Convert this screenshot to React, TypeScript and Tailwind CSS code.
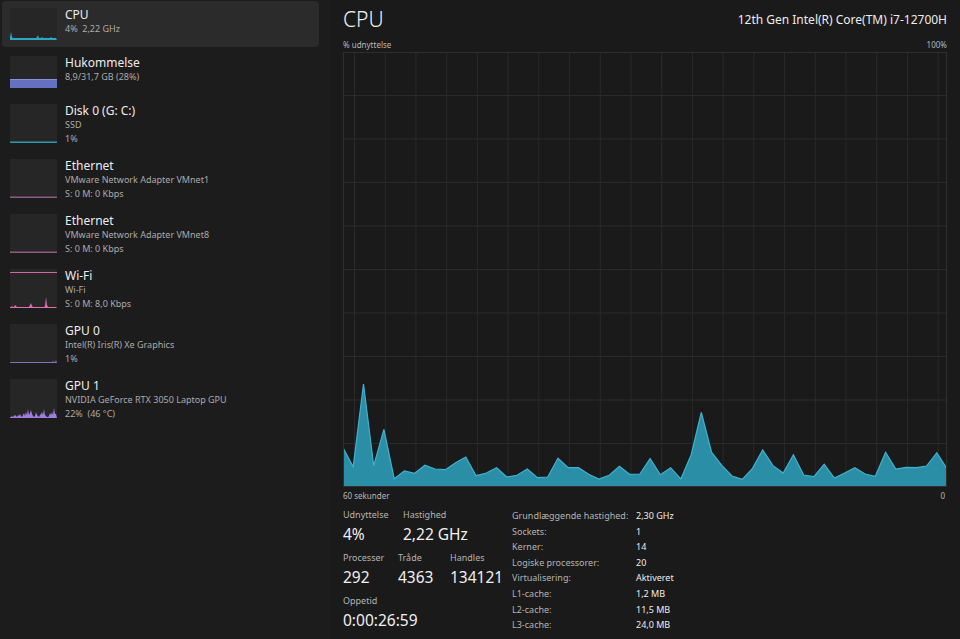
const font = { fontFamily: '"Segoe UI", "Noto Sans", "Open Sans", sans-serif' }

const cpuData = [233, 290, 42, 287, 178, 326, 303, 310, 286, 297, 299, 278, 261, 317, 309, 293, 321, 316, 297, 323, 321, 265, 293, 293, 313, 327, 316, 289, 313, 312, 266, 314, 293, 327, 255, 127, 246, 286, 318, 328, 295, 240, 287, 309, 254, 315, 320, 283, 324, 309, 293, 312, 319, 247, 297, 292, 293, 288, 248, 296]

function CpuChart() {
  const w = 604
  const h = 435
  const step = w / 59
  const pts = cpuData.map((v, i) => `${(i * step).toFixed(1)},${(v / 3 + 318).toFixed(1)}`)
  const area = `0,${h} ${pts.join(" ")} ${w},${h}`
  return (
    <svg viewBox={`0 0 ${w} ${h}`} width={w} height={h} className="block">
      {Array.from({ length: 9 }).map((_, i) => (
        <line key={"h" + i} x1={0} x2={w} y1={(i + 1) * 43.5} y2={(i + 1) * 43.5} stroke="#2a2a2a" strokeWidth={1} />
      ))}
      {Array.from({ length: 20 }).map((_, i) => (
        <line key={"v" + i} x1={11.5 + i * 30.72} x2={11.5 + i * 30.72} y1={0} y2={h} stroke="#2a2a2a" strokeWidth={1} />
      ))}
      <polygon points={area} fill="#2a8ea7" />
      <polyline points={pts.join(" ")} fill="none" stroke="#3fb2cf" strokeWidth={1.2} />
      <rect x={0.5} y={0.5} width={w - 1} height={h - 1} fill="none" stroke="#2e2e2e" />
    </svg>
  )
}

function Spark({ h, kind }: { h: number; kind: string }) {
  const w = 47
  let body = null
  if (kind === "cpu") {
    const v = [3, 8, 3, 2, 2, 2, 2, 2, 2, 2, 2, 2, 2, 2, 2, 2, 2, 2, 2, 2, 2, 2, 2, 2, 2, 2, 2, 3, 5, 2, 2, 2, 3, 2, 2, 2, 2, 2, 2, 2, 2, 3, 2, 2, 2, 2, 2]
    const pts = v.map((y, i) => `${i},${h - y}`).join(" ")
    body = <polygon points={`0,${h} ${pts} ${w},${h}`} fill="#2ba7c4" />
  } else if (kind === "mem") {
    body = (
      <>
        <rect x={0} y={h - 9} width={w} height={9} fill="#6670c0" />
        <rect x={0} y={h - 9} width={w} height={1} fill="#8890db" />
      </>
    )
  } else if (kind === "disk") {
    body = <rect x={0} y={h - 1.5} width={w} height={1.5} fill="#2b98ae" />
  } else if (kind === "eth") {
    body = <rect x={0} y={h - 1.5} width={w} height={1.5} fill="#8c5a86" />
  } else if (kind === "wifi") {
    const v = [1, 1, 2, 1, 1, 3, 2, 1, 1, 1, 1, 1, 1, 1, 1, 1, 1, 1, 1, 1, 3, 5, 2, 1, 1, 1, 1, 1, 1, 1, 1, 1, 1, 1, 1, 2, 11, 3, 1, 1, 1, 1, 1, 1, 1, 1, 1]
    const pts = v.map((y, i) => `${i},${h - y}`).join(" ")
    body = (
      <>
        <rect x={0} y={3} width={w} height={1} fill="#d266a8" />
        <polygon points={`0,${h} ${pts} ${w},${h}`} fill="#e06db2" />
      </>
    )
  } else if (kind === "gpu0") {
    const v = [1, 1, 1, 1, 1, 1, 1, 1, 1, 1, 1, 1, 1, 1, 1, 1, 1, 1, 1, 1, 1, 1, 1, 1, 1, 1, 1, 1, 1, 1, 1, 1, 1, 1, 1, 1, 1, 1, 1, 1, 1, 1, 1, 2, 1, 1, 3]
    const pts = v.map((y, i) => `${i},${h - y}`).join(" ")
    body = <polygon points={`0,${h} ${pts} ${w},${h}`} fill="#8a6bc0" />
  } else if (kind === "gpu1") {
    const v = [1, 1, 2, 1, 2, 3, 2, 1, 3, 2, 4, 2, 1, 3, 5, 2, 6, 3, 9, 3, 5, 8, 4, 2, 1, 2, 6, 3, 2, 1, 3, 4, 6, 3, 9, 3, 2, 1, 1, 2, 5, 3, 6, 3, 10, 4, 4]
    const pts = v.map((y, i) => `${i},${h - y}`).join(" ")
    body = <polygon points={`0,${h} ${pts} ${w},${h}`} fill="#a27cde" />
  }
  return (
    <svg width={w} height={h} viewBox={`0 0 ${w} ${h}`} className="block shrink-0 bg-[#262626]">
      {body}
    </svg>
  )
}

const items = [
  { title: "CPU", lines: ["4%  2,22 GHz"], kind: "cpu", active: true },
  { title: "Hukommelse", lines: ["8,9/31,7 GB (28%)"], kind: "mem" },
  { title: "Disk 0 (G: C:)", lines: ["SSD", "1%"], kind: "disk" },
  { title: "Ethernet", lines: ["VMware Network Adapter VMnet1", "S: 0 M: 0 Kbps"], kind: "eth" },
  { title: "Ethernet", lines: ["VMware Network Adapter VMnet8", "S: 0 M: 0 Kbps"], kind: "eth" },
  { title: "Wi-Fi", lines: ["Wi-Fi", "S: 0 M: 8,0 Kbps"], kind: "wifi" },
  { title: "GPU 0", lines: ["Intel(R) Iris(R) Xe Graphics", "1%"], kind: "gpu0" },
  { title: "GPU 1", lines: ["NVIDIA GeForce RTX 3050 Laptop GPU", "22%  (46 °C)"], kind: "gpu1" },
]

const specs = [
  ["Grundlæggende hastighed:", "2,30 GHz"],
  ["Sockets:", "1"],
  ["Kerner:", "14"],
  ["Logiske processorer:", "20"],
  ["Virtualisering:", "Aktiveret"],
  ["L1-cache:", "1,2 MB"],
  ["L2-cache:", "11,5 MB"],
  ["L3-cache:", "24,0 MB"],
]

function Stat({ label, value, className }: { label: string; value: string; className?: string }) {
  return (
    <div className={className}>
      <div className="text-[9px] leading-[16px] text-[#b4b4b4]">{label}</div>
      <div className="text-[15.5px] leading-[22px] text-[#f0f0f0]">{value}</div>
    </div>
  )
}

export default function App() {
  return (
    <div className="flex h-[639px] w-[960px] overflow-hidden bg-[#1b1b1b] text-white" style={font}>
      <div className="flex w-[330px] shrink-0 flex-col gap-[2px] bg-[#1c1c1c] pl-[2px] pr-[11px] pt-[1px]">
        {items.map((it, i) => {
          const h = it.lines.length > 1 ? 39 : 32
          return (
            <div
              key={i}
              className={`flex gap-[8px] rounded-[4px] px-[8px] pt-[6px] ${it.active ? "bg-[#2b2b2b]" : ""}`}
              style={{ height: h + 14 }}
            >
              <div className="pt-[1px]">
                <Spark h={h} kind={it.kind} />
              </div>
              <div className="flex flex-col">
                <div className="text-[12px] leading-[15px] text-[#ececec]">{it.title}</div>
                {it.lines.map((l, j) => (
                  <div key={j} className="whitespace-pre text-[9px] leading-[13.5px] text-[#ababab]">
                    {l}
                  </div>
                ))}
              </div>
            </div>
          )
        })}
      </div>

      <div className="flex flex-1 flex-col bg-[#1a1a1a] pl-[13px] pr-[13px]">
        <div className="flex h-[37px] items-end justify-between pb-[4px]">
          <div className="text-[21px] font-light leading-[28px] text-[#f2f2f2]">CPU</div>
          <div className="pb-[4px] text-[12px] leading-[18px] text-[#ececec]">12th Gen Intel(R) Core(TM) i7-12700H</div>
        </div>
        <div className="flex h-[15px] items-center justify-between text-[8px] leading-[12px] text-[#b8b8b8]">
          <span>% udnyttelse</span>
          <span>100%</span>
        </div>
        <CpuChart />
        <div className="flex h-[18px] items-center justify-between text-[8px] leading-[12px] text-[#b8b8b8]">
          <span>60 sekunder</span>
          <span className="pr-[2px]">0</span>
        </div>

        <div className="flex pt-[2px]">
          <div className="flex w-[169px] flex-col gap-[5px]">
            <div className="flex">
              <Stat label="Udnyttelse" value="4%" className="w-[60px]" />
              <Stat label="Hastighed" value="2,22 GHz" />
            </div>
            <div className="flex">
              <Stat label="Processer" value="292" className="w-[55px]" />
              <Stat label="Tråde" value="4363" className="w-[52px]" />
              <Stat label="Handles" value="134121" />
            </div>
            <Stat label="Oppetid" value="0:00:26:59" />
          </div>
          <div className="flex flex-col pt-[1px]">
            {specs.map(([k, v]) => (
              <div key={k} className="flex h-[15.6px] items-center whitespace-nowrap text-[9px]">
                <span className="w-[124px] text-[#b4b4b4]">{k}</span>
                <span className="text-[#ececec]">{v}</span>
              </div>
            ))}
          </div>
        </div>
      </div>
    </div>
  )
}
